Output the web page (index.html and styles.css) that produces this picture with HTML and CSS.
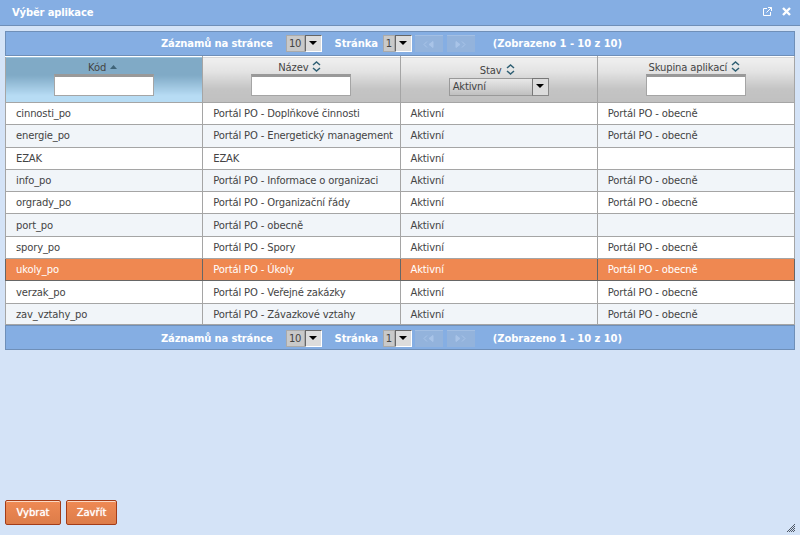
FILE: index.html
```html
<!DOCTYPE html>
<html lang="cs">
<head>
  <meta charset="UTF-8">
  <link rel="stylesheet" href="styles.css">
  <title>Výběr aplikace</title>
</head>
<body>
  <div class="dialog">
    <header class="titlebar">
      <span class="title">Výběr aplikace</span>
      <span class="title-icons">
        <svg width="9" height="9" viewBox="0 0 9 9" fill="none" stroke="#fff" stroke-width="1"><path d="M4 1.500H.5v7h7V5M5 .5h3.500V4M8.500 .5L3.500 5.500"/></svg>
        <svg width="9" height="9" viewBox="0 0 9 9" fill="none" stroke="#fff" stroke-width="2.400"><path d="M1 1l7 7M8 1L1 8"/></svg>
      </span>
    </header>

    <main class="content">
      <div class="pager">
        <span class="pager-label">Záznamů na stránce</span>
        <span class="pick pick-size"><span class="pick-value">10</span><span class="pick-arrow"></span></span>
        <span class="pager-label page-label">Stránka</span>
        <span class="pick pick-page"><span class="pick-value">1</span><span class="pick-arrow"></span></span>
        <span class="nav-btn"><svg width="11" height="7" viewBox="0 0 11 7" fill="none" stroke="#a9c4e8"><path d="M4 .5L1 3.500l3 3"/><path d="M10 .5v6L6 3.500z" fill="#a9c4e8"/></svg></span>
        <span class="nav-btn"><svg width="11" height="7" viewBox="0 0 11 7" fill="none" stroke="#a9c4e8"><path d="M1 .5v6l4-3z" fill="#a9c4e8"/><path d="M7 .5l3 3-3 3"/></svg></span>
        <span class="pager-label info-label">(Zobrazeno 1 - 10 z 10)</span>
      </div>

      <table class="grid">
        <thead>
          <tr>
            <th class="sorted">
              <div class="head">Kód <svg class="sort sort-asc" width="7" height="4" viewBox="0 0 7 4"><path d="M3.500 0L7 4H0z" fill="#3f6478"/></svg></div>
              <input class="filter" type="text">
            </th>
            <th>
              <div class="head">Název <svg class="sort" width="9" height="11" viewBox="0 0 9 11" fill="none" stroke="#2f5f73" stroke-width="1.500"><path d="M1 4l3.500-3L8 4M1 7l3.500 3L8 7"/></svg></div>
              <input class="filter" type="text">
            </th>
            <th class="state-cell">
              <div class="head">Stav <svg class="sort" width="9" height="11" viewBox="0 0 9 11" fill="none" stroke="#2f5f73" stroke-width="1.500"><path d="M1 4l3.500-3L8 4M1 7l3.500 3L8 7"/></svg></div>
              <span class="pick pick-state"><span class="pick-value">Aktivní</span><span class="pick-arrow"></span></span>
            </th>
            <th>
              <div class="head">Skupina aplikací <svg class="sort" width="9" height="11" viewBox="0 0 9 11" fill="none" stroke="#2f5f73" stroke-width="1.500"><path d="M1 4l3.500-3L8 4M1 7l3.500 3L8 7"/></svg></div>
              <input class="filter" type="text">
            </th>
          </tr>
        </thead>
        <tbody>
          <tr><td>cinnosti_po</td><td>Portál PO - Doplňkové činnosti</td><td>Aktivní</td><td>Portál PO - obecně</td></tr>
          <tr><td>energie_po</td><td>Portál PO - Energetický management</td><td>Aktivní</td><td>Portál PO - obecně</td></tr>
          <tr><td>EZAK</td><td>EZAK</td><td>Aktivní</td><td></td></tr>
          <tr><td>info_po</td><td>Portál PO - Informace o organizaci</td><td>Aktivní</td><td>Portál PO - obecně</td></tr>
          <tr><td>orgrady_po</td><td>Portál PO - Organizační řády</td><td>Aktivní</td><td>Portál PO - obecně</td></tr>
          <tr><td>port_po</td><td>Portál PO - obecně</td><td>Aktivní</td><td></td></tr>
          <tr><td>spory_po</td><td>Portál PO - Spory</td><td>Aktivní</td><td>Portál PO - obecně</td></tr>
          <tr class="selected"><td>ukoly_po</td><td>Portál PO - Úkoly</td><td>Aktivní</td><td>Portál PO - obecně</td></tr>
          <tr><td>verzak_po</td><td>Portál PO - Veřejné zakázky</td><td>Aktivní</td><td>Portál PO - obecně</td></tr>
          <tr class="last"><td>zav_vztahy_po</td><td>Portál PO - Závazkové vztahy</td><td>Aktivní</td><td>Portál PO - obecně</td></tr>
        </tbody>
      </table>

      <div class="pager pager-bottom">
        <span class="pager-label">Záznamů na stránce</span>
        <span class="pick pick-size"><span class="pick-value">10</span><span class="pick-arrow"></span></span>
        <span class="pager-label page-label">Stránka</span>
        <span class="pick pick-page"><span class="pick-value">1</span><span class="pick-arrow"></span></span>
        <span class="nav-btn"><svg width="11" height="7" viewBox="0 0 11 7" fill="none" stroke="#a9c4e8"><path d="M4 .5L1 3.500l3 3"/><path d="M10 .5v6L6 3.500z" fill="#a9c4e8"/></svg></span>
        <span class="nav-btn"><svg width="11" height="7" viewBox="0 0 11 7" fill="none" stroke="#a9c4e8"><path d="M1 .5v6l4-3z" fill="#a9c4e8"/><path d="M7 .5l3 3-3 3"/></svg></span>
        <span class="pager-label info-label">(Zobrazeno 1 - 10 z 10)</span>
      </div>
    </main>

    <footer class="actions">
      <button class="action">Vybrat</button>
      <button class="action">Zavřít</button>
    </footer>

    <svg class="grip" width="8" height="8" viewBox="0 0 8 8" fill="#4f5866"><path d="M7 0h1v1H7zM6 1h1v1H6zM5 2h1v1H5zM7 2h1v1H7zM4 3h1v1H4zM6 3h1v1H6zM3 4h1v1H3zM5 4h1v1H5zM7 4h1v1H7zM2 5h1v1H2zM4 5h1v1H4zM6 5h1v1H6zM1 6h1v1H1zM3 6h1v1H3zM5 6h1v1H5zM7 6h1v1H7zM0 7h1v1H0zM2 7h1v1H2zM4 7h1v1H4zM6 7h1v1H6z"/></svg>
  </div>
</body>
</html>
```

FILE: styles.css
```css
html, body {
  margin: 0;
  padding: 0;
  height: 100%;
}

body {
  font-family: "DejaVu Sans", sans-serif;
  font-size: 10px;
  letter-spacing: -0.15px;
  color: #444;
  background-color: #d4e3f7;
  overflow: hidden;
}

.dialog {
  position: relative;
  display: flex;
  flex-direction: column;
  height: 535px;
}

.titlebar {
  display: flex;
  align-items: center;
  justify-content: space-between;
  box-sizing: border-box;
  height: 26px;
  padding: 0 9px 0 12px;
  background-color: #85aee3;
  border-bottom: 1px solid #6f8fb8;
  color: #fff;
  font-weight: bold;
}

.title-icons {
  display: flex;
  align-items: center;
  gap: 10px;
  margin-bottom: 3px;
}

.content {
  flex: 1;
  padding: 5px 5px 0;
}

.pager {
  display: flex;
  align-items: center;
  justify-content: center;
  box-sizing: border-box;
  height: 25px;
  padding-right: 17px;
  background-color: #85aee3;
  border: 1px solid #6f8fb8;
  color: #fff;
}

.pager-bottom {
  padding-top: 1px;
}

.pager-label {
  font-weight: bold;
}

.page-label {
  margin: 0 5px 0 13px;
}

.info-label {
  margin-left: 18px;
  letter-spacing: -0.07px;
}

.pick {
  display: inline-flex;
  box-sizing: border-box;
  height: 17px;
  font-size: 10px;
  color: #444;
}

.pick-value {
  flex: 1;
  line-height: 15px;
  background-color: #c9c9c9;
  border: 1px solid #aaa;
}

.pick-arrow {
  position: relative;
  flex: none;
  box-sizing: border-box;
  width: 17px;
  background-color: #dcdcdc;
  border: 1px solid #666;
  border-right-color: #fff;
  border-bottom-color: #fff;
}

.pick-arrow::after {
  content: "";
  position: absolute;
  left: 3px;
  top: 5px;
  border: 4px solid transparent;
  border-top: 4px solid #000;
  border-bottom: 0;
}

.pick-size {
  width: 36px;
  margin-left: 13px;
  text-align: center;
}

.pick-page {
  width: 29px;
  text-align: center;
}

.pick-state {
  width: 100px;
  height: 18px;
  text-align: left;
}

.pick-state .pick-value {
  padding-left: 3px;
  line-height: 16px;
  background: linear-gradient(#e8e8e8, #c0c0c0);
  border-color: #999;
  border-right: 0;
}

.pick-state .pick-arrow {
  border-color: #777;
  border-right-color: #888;
  border-bottom-color: #888;
}

.nav-btn {
  display: flex;
  align-items: center;
  justify-content: center;
  box-sizing: border-box;
  width: 28px;
  height: 17px;
  margin-left: 3px;
  background-color: #93b3dc;
  border-top: 1px solid #a3bfe3;
}

.nav-btn + .nav-btn {
  margin-left: 4px;
}

.grid {
  width: 790px;
  table-layout: fixed;
  border-collapse: collapse;
}

.grid th {
  height: 46px;
  box-sizing: border-box;
  padding: 0 0 3px;
  font-weight: normal;
  text-align: center;
  vertical-align: middle;
  background: linear-gradient(#f0f0f0 0, #e4e4e4 30%, #c4c4c4 70%, #c0c0c0 100%);
  border-left: 1px solid #a5a5a5;
  border-right: 1px solid #a5a5a5;
  border-top: 1px solid #fff;
}

.grid th.sorted {
  background: linear-gradient(#80aac6 0, #80aac6 40%, #b7dcf4 85%, #b7dcf4 100%);
}

.grid th.state-cell {
  padding: 1px 0 0;
}

.head {
  padding-right: 3px;
  line-height: 13px;
}

.state-cell .head {
  margin-bottom: 1px;
}

.sort {
  margin-left: 1px;
  vertical-align: -1px;
}

.sort-asc {
  vertical-align: 2px;
}

.filter {
  display: block;
  box-sizing: border-box;
  width: 100px;
  height: 22px;
  margin: 0 auto;
  padding: 0;
  background-color: #fff;
  border: 1px solid #a5a5a5;
  border-top: 3px solid #999;
  border-radius: 0;
}

.grid td {
  height: 22.300px;
  box-sizing: border-box;
  padding: 0 0 0 10px;
  white-space: nowrap;
  border: 1px solid #a5a5a5;
}

.grid tbody tr:nth-child(even) td {
  background-color: #f1f5f9;
}

.grid tbody tr:nth-child(odd) td {
  background-color: #fff;
}

.grid tbody tr.last td {
  height: 21.500px;
  padding-top: 1px;
}

.grid tbody tr.selected td {
  background-color: #ef8851;
  color: #fff;
  border-color: #666;
}

.actions {
  display: flex;
  gap: 5px;
  padding: 0 5px 10px;
}

.action {
  box-sizing: border-box;
  width: 56px;
  height: 25px;
  padding: 0;
  font-family: inherit;
  font-size: 10px;
  letter-spacing: 0;
  color: #fff;
  text-shadow: 0 0 1px #fff;
  background: linear-gradient(#ef8a54, #dd7c49);
  border: 1px solid #a33c18;
  border-radius: 2px;
  box-shadow: inset 0 1px 0 #fbd9c5;
}

.action + .action {
  width: 51px;
}

.grip {
  position: absolute;
  right: 5px;
  bottom: 3px;
}
```
